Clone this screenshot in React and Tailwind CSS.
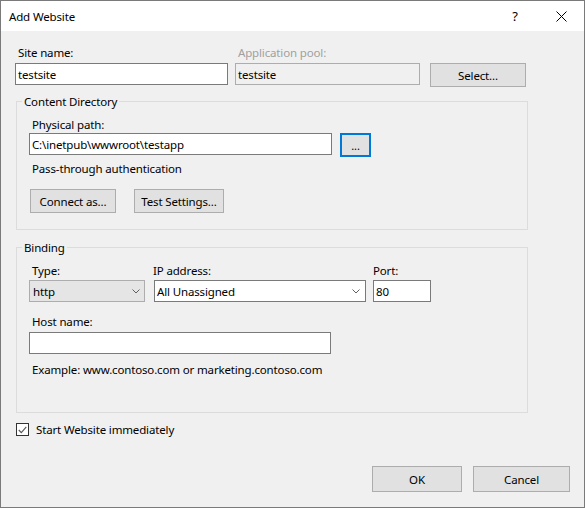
import React from "react";

const Chevron = () => (
  <svg width="8" height="5" viewBox="0 0 8 5" className="shrink-0">
    <path d="M0.5 0.5 L4 4 L7.5 0.5" fill="none" stroke="#606060" strokeWidth="1" />
  </svg>
);

const Button = ({ className = "", children }) => (
  <button
    type="button"
    className={`flex items-center justify-center border border-[#adadad] bg-[#e1e1e1] text-black ${className}`}
  >
    {children}
  </button>
);

const TextBox = ({ value, className = "" }) => (
  <div className={`h-[22px] border border-[#7a7a7a] bg-white flex items-center pl-[2px] ${className}`}>
    {value}
  </div>
);

export default function App() {
  return (
    <div className="w-[585px] h-[509px] bg-white font-['Noto_Sans',sans-serif] text-[11.5px] tracking-[-0.15px] leading-[15px] text-black">
      <div className="h-[508px] border border-[#7a7a7a] bg-[#f0f0f0] flex flex-col">
        {/* title bar */}
        <div className="h-[30px] bg-white flex items-center pl-[8px] shrink-0">
          <span>Add Website</span>
          <span className="ml-auto w-[46px] text-center text-[13px]">?</span>
          <span className="w-[46px] flex justify-center">
            <svg width="11" height="11" viewBox="0 0 11 11">
              <path d="M0.5 0.5 L10.5 10.5 M10.5 0.5 L0.5 10.5" stroke="#000" strokeWidth="1" />
            </svg>
          </span>
        </div>

        <div className="px-[14px] flex flex-col">
          {/* site name / app pool */}
          <div className="flex items-start mt-[14px]">
            <div className="w-[213px]">
              <div className="pl-[3px]">Site name:</div>
              <TextBox value="testsite" className="mt-[3px]" />
            </div>
            <div className="w-[185px] ml-[7px]">
              <div className="pl-[3px] text-[#a0a0a0]">Application pool:</div>
              <div className="mt-[3px] h-[22px] border border-[#adadad] bg-[#f0f0f0] flex items-center pl-[2px]">
                testsite
              </div>
            </div>
            <Button className="ml-[10px] mt-[18px] w-[96px] h-[24px]">Select...</Button>
          </div>

          {/* content directory */}
          <fieldset className="ml-[1px] mt-[7px] w-[512px] border border-[#dcdcdc]">
            <legend className="ml-[5px] px-[2px]">Content Directory</legend>
            <div className="pl-[12px] pb-[16px]">
              <div className="mt-[8px] pl-[3px]">Physical path:</div>
              <div className="flex items-start mt-[1px]">
                <TextBox value="C:\inetpub\wwwroot\testapp" className="w-[303px]" />
                <Button className="ml-[8px] w-[31px] h-[24px] !border-2 !border-[#0078d7] text-[11px]">...</Button>
              </div>
              <div className="mt-[4px] pl-[3px]">Pass-through authentication</div>
              <div className="flex mt-[13px]">
                <Button className="ml-[1px] w-[86px] h-[24px]">Connect as...</Button>
                <Button className="ml-[18px] w-[90px] h-[24px]">Test Settings...</Button>
              </div>
            </div>
          </fieldset>

          {/* binding */}
          <fieldset className="ml-[1px] mt-[10px] w-[512px] border border-[#dcdcdc]">
            <legend className="ml-[5px] px-[2px]">Binding</legend>
            <div className="pl-[12px] pb-[35px]">
              <div className="flex items-start mt-[8px]">
                <div className="w-[116px]">
                  <div className="pl-[3px]">Type:</div>
                  <div className="mt-[2px] h-[22px] border border-[#adadad] bg-[#e5e5e5] flex items-center justify-between pl-[3px] pr-[4px]">
                    <span>http</span>
                    <Chevron />
                  </div>
                </div>
                <div className="w-[212px] ml-[9px]">
                  <div className="-ml-[1px]">IP address:</div>
                  <div className="mt-[2px] h-[22px] border border-[#7a7a7a] bg-white flex items-center justify-between pl-[2px] pr-[5px]">
                    <span>All Unassigned</span>
                    <Chevron />
                  </div>
                </div>
                <div className="w-[58px] ml-[7px]">
                  <div>Port:</div>
                  <TextBox value="80" className="mt-[2px]" />
                </div>
              </div>
              <div className="mt-[12px] pl-[3px]">Host name:</div>
              <TextBox value="" className="mt-[3px] w-[302px]" />
              <div className="mt-[8px] pl-[3px]">Example: www.contoso.com or marketing.contoso.com</div>
            </div>
          </fieldset>

          {/* start immediately */}
          <div className="flex items-center mt-[9px] ml-[1px]">
            <div className="w-[13px] h-[13px] border border-[#333] bg-white flex items-center justify-center">
              <svg width="9" height="8" viewBox="0 0 9 8">
                <path d="M0.8 4 L3.3 6.6 L8.3 0.8" fill="none" stroke="#555" strokeWidth="1.1" />
              </svg>
            </div>
            <span className="ml-[7px]">Start Website immediately</span>
          </div>

          {/* dialog buttons */}
          <div className="flex justify-end mt-[29px]">
            <Button className="w-[90px] h-[26px]">OK</Button>
            <Button className="ml-[11px] w-[97px] h-[26px]">Cancel</Button>
          </div>
        </div>
      </div>
    </div>
  );
}
